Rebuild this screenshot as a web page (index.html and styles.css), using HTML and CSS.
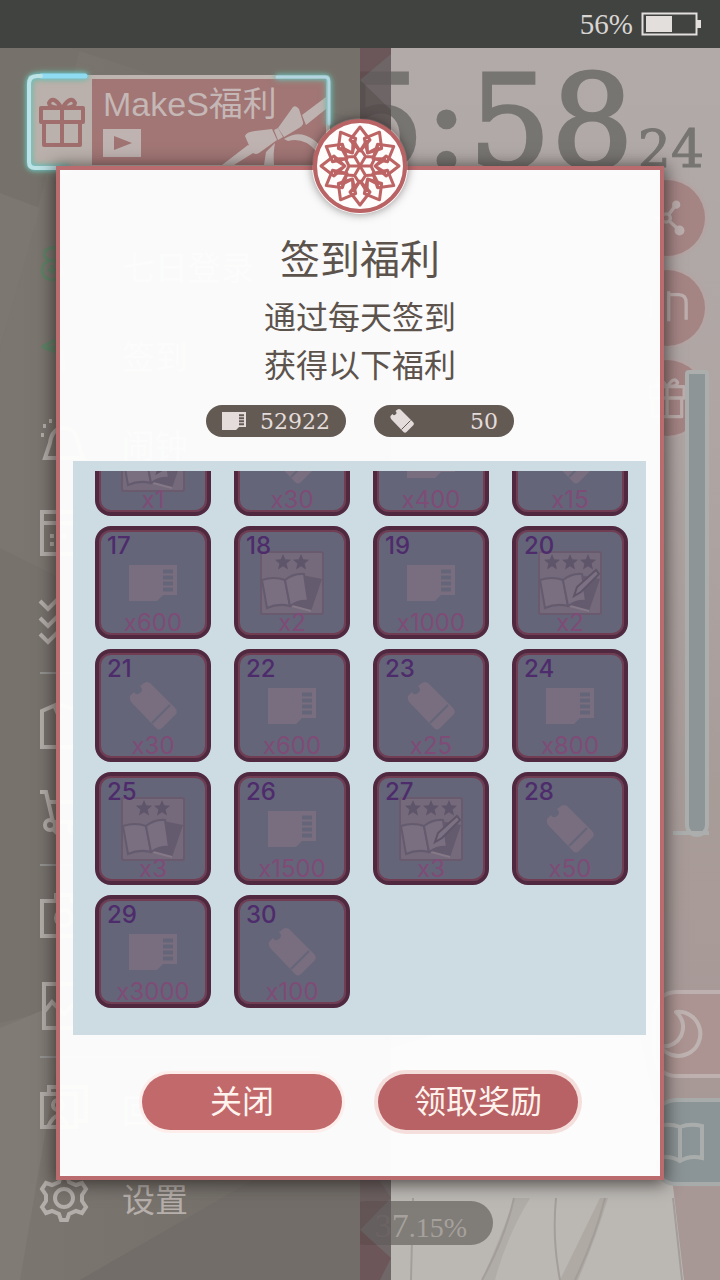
FILE: index.html
```
<!DOCTYPE html>
<html lang="zh-CN">
<head>
<meta charset="UTF-8">
<meta name="viewport" content="width=device-width, initial-scale=1.0">
<title>签到福利</title>
<link rel="stylesheet" href="styles.css">
</head>
<body>

<svg class="sprites" aria-hidden="true">
  <symbol id="i-card" viewBox="0 0 48 48">
    <path d="M0 6H48V36H34L28 42H0Z" fill="currentColor"/>
    <path d="M34 12.500h10M34 18.500h10M34 24.500h10M34 30.500h10" stroke="var(--cut)" stroke-width="4"/>
  </symbol>
  <symbol id="i-ticket" viewBox="0 0 48 48">
    <path d="M1 14Q0 18 3 21L27 46Q30 49 33 46L47 32Q49 29 46 26L21 1Q18 -1 15 1L11 4Q15 8 11 11Q7 14 5 10Z" fill="currentColor"/>
    <path d="M23 41L41 23" stroke="var(--cut)" stroke-width="2"/>
  </symbol>
  <symbol id="i-star" viewBox="0 0 16 16">
    <path d="M8 0L10.200 5.300L16 5.800L11.600 9.600L13 15.500L8 12.300L3 15.500L4.400 9.600L0 5.800L5.800 5.300Z"/>
  </symbol>
  <symbol id="i-book" viewBox="0 0 64 64">
    <rect x="1" y="1" width="62" height="62" rx="2" fill="#746a7b" stroke="#6a5a6e" stroke-width="2"/>
    <path d="M42 24L62 28L51 60L30 55Z" fill="#655b6f"/>
    <path d="M32 55L51 60" stroke="#857987" stroke-width="2"/>
    <path d="M2 29Q14 25 25 29L30 55Q18 52 7 57Z" fill="#7a6f80" stroke="#655b6f" stroke-width="2"/>
    <path d="M25 29Q34 22 44 23L48 50Q39 49 30 55Z" fill="#7a6f80" stroke="#655b6f" stroke-width="2"/>
  </symbol>
  <symbol id="i-pen" viewBox="0 0 64 64">
    <path d="M36 45L39 36L58 19L61 23L43 41Z" fill="#7c7182" stroke="#5f5569" stroke-width="2"/>
  </symbol>
  <symbol id="i-gift" viewBox="0 0 48 54">
    <g fill="none" stroke="currentColor" stroke-width="4" stroke-linejoin="round">
      <path d="M3 13H45V27H3ZM6 27V50H42V27M24 13V50M23 12Q12 14 11 8Q15 0 23 12ZM25 12Q36 14 37 8Q33 0 25 12Z"/>
    </g>
  </symbol>
</svg>

<header class="status">
  <span>56%</span>
  <svg class="battery" viewBox="0 0 60 24">
    <rect x="1.500" y="1.500" width="54" height="21" fill="none" stroke="#e3dfdd" stroke-width="2"/>
    <rect x="5" y="4" width="26" height="16" fill="#e3dfdd"/>
    <rect x="56" y="8" width="4" height="8" fill="#e3dfdd"/>
  </svg>
</header>

<main class="stage">

  <section class="home">
    <svg class="scene" viewBox="0 0 720 1232" preserveAspectRatio="xMaxYMax slice" aria-hidden="true">
      <path d="M360 1010L440 985L640 990L672 1130L684 1232H360Z" fill="#bbb8b4"/>
      <path d="M515 1150Q500 1190 482 1232H495Q506 1190 530 1150Z" fill="#b0aca7"/>
      <path d="M600 1150L560 1232H578Q596 1190 608 1150Z" fill="#afaaa4"/>
      <path d="M514 1150Q505 1190 482 1232M556 1150Q552 1190 560 1232M605 1150Q595 1190 575 1232M413 1150L411 1232M673 1150L682 1232" fill="none" stroke="#a39e99" stroke-width="2"/>
    </svg>
    <div class="clock"><span>5:58</span><small>24</small></div>
    <div class="tools">
      <button class="tool" aria-label="分享">
        <svg viewBox="0 0 48 48" fill="none" stroke="currentColor" stroke-width="4">
          <circle cx="23" cy="24" r="5"/><path d="M26 20L34 9M27 28L38 38M18 24H8"/>
          <circle cx="35" cy="8" r="3" fill="currentColor"/><circle cx="39" cy="39" r="4" fill="currentColor"/>
        </svg>
      </button>
      <button class="tool" aria-label="床">
        <svg viewBox="0 0 48 48" fill="none" stroke="currentColor" stroke-width="4">
          <path d="M5 8V36M26 4V40M26 8H38Q47 8 47 18V38"/>
        </svg>
      </button>
      <button class="tool" aria-label="礼物"><svg viewBox="0 0 48 54"><use href="#i-gift"/></svg></button>
    </div>
    <div class="gauge"></div>
    <div class="tabs">
      <button class="tab" aria-label="夜间">
        <svg viewBox="0 0 48 48" fill="none" stroke="currentColor" stroke-width="4" stroke-linejoin="round">
          <path d="M20 2A22 22 0 1 1 4 36Q18 38 25 26Q31 12 20 2Z"/>
        </svg>
      </button>
      <button class="tab blue" aria-label="书">
        <svg viewBox="0 0 48 48" fill="none" stroke="currentColor" stroke-width="4">
          <path d="M2 8Q14 5 24 9Q34 5 46 8V40Q34 37 24 43Q14 37 2 40ZM24 9V43"/>
        </svg>
      </button>
    </div>
    <div class="progress"><b>37</b>.15%</div>
  </section>

  <svg class="strip" viewBox="0 0 31 1232" preserveAspectRatio="none" aria-hidden="true">
    <path d="M0 0H31V6L0 32Z" fill="#5f484c"/>
    <path d="M0 32L31 62V110H0Z" fill="#544a4b"/>
    <path d="M0 1130H18L31 1150L0 1182Z" fill="#5e4f51"/>
    <path d="M0 1182L31 1210L20 1232H0Z" fill="#5f464a"/>
  </svg>

  <nav class="drawer">
    <svg class="scene" viewBox="0 0 360 1232" preserveAspectRatio="none" aria-hidden="true">
      <path d="M0 0H80L70 40L0 300Z" fill="#76716b"/>
      <path d="M70 0H360V70L210 45Z" fill="#76706a"/>
      <path d="M0 145L40 160L0 300Z" fill="#7d7771"/>
      <path d="M0 500L60 530V960L0 975Z" fill="#77726c"/>
      <path d="M0 980L60 955V1000L20 1232H0Z" fill="#807b75"/>
      <path d="M80 1232L360 1070V1232Z" fill="#726d68"/>
    </svg>
    <a class="banner" href="#">
      <span class="banner-icon"><svg viewBox="0 0 48 54"><use href="#i-gift"/></svg></span>
      <span class="banner-body">
        <span class="banner-title">MakeS福利</span>
        <svg class="play" viewBox="0 0 38 28"><path d="M0 0H38V28H0Z" fill="#bfb3b1"/><path d="M11 7L29 14L11 21Z" fill="#9f7473"/></svg>
        <svg class="ribbon" viewBox="0 0 104 74" fill="#bfb3b1" aria-hidden="true">
          <path d="M0 74L26 54L36 59L12 74ZM80 24L104 6V18L84 34Z"/>
          <path d="M23 45Q24 41 33 40L50 38L55 49L37 62Q32 65 29 59Z"/>
          <path d="M56 37L71 16Q74 14 77 18L81 31Q82 34 77 37L62 46Z"/>
          <path d="M52 39L56 37L61 46L56 49ZM44 61L53 52Q51 62 52 74H42ZM62 48Q84 34 104 62L94 60Q82 46 66 50Z"/>
        </svg>
      </span>
      <svg class="glow" viewBox="0 0 304 96" preserveAspectRatio="none" fill="none" stroke-linecap="round" aria-hidden="true">
        <path d="M14 2H58" stroke="#8fdcf2" stroke-width="5"/>
        <path d="M14 2H10Q2 2 2 10V88Q2 94 8 94H40" stroke="#bce3e6" stroke-width="4"/>
        <path d="M250 3H298Q302 3 302 8V50" stroke="#b4d5e0" stroke-width="3"/>
      </svg>
    </a>
    <ul class="menu">
      <li><a class="on" href="#"><svg viewBox="0 0 48 48"><path d="M10 18Q2 16 5 9Q10 4 18 7M12 18Q2 20 2 29Q3 37 12 38Q21 37 22 29Q21 20 12 18ZM7 28H16M12 23V32"/></svg>七日登录</a></li>
      <li><a class="on" href="#"><svg viewBox="0 0 48 48"><path d="M2 16L13 10Q25 14 24 42Q20 20 13 20L2 16H16"/></svg>签到</a></li>
      <li><a href="#"><svg viewBox="0 0 48 48"><path d="M5 38H43L38 23Q36 8 24 8Q12 8 10 23ZM1 15h3M3 6h3M9 1h3"/></svg>闹钟</a></li>
      <li><a href="#" aria-label="日历"><svg viewBox="0 0 48 48"><path d="M2 3H46V45H2ZM2 14H46M10 27h4M10 35h4M22 27h4"/></svg></a></li>
      <li><a href="#" aria-label="任务"><svg viewBox="0 0 48 48"><path d="M0 3L8 11L18 1M0 20L8 28L18 18M0 36L8 44L18 34"/></svg></a></li>
      <li class="line"><a href="#" aria-label="房间"><svg viewBox="0 0 48 48"><path d="M2 46V10L18 3L46 12V46ZM14 4L20 18"/></svg></a></li>
      <li><a href="#" aria-label="商店"><svg viewBox="0 0 48 48"><path d="M0 2H6L13 32M7 12H42L36 32H13"/><circle cx="10" cy="35" r="5"/><circle cx="34" cy="38" r="5"/><path d="M12 38L20 46"/></svg></a></li>
      <li class="line"><a href="#" aria-label="相机"><svg viewBox="0 0 48 48"><path d="M2 8H16V2H32V8H46V43H2Z"/><circle cx="24" cy="25" r="8"/></svg></a></li>
      <li><a href="#" aria-label="图片"><svg viewBox="0 0 48 48"><path d="M4 2H44V46H4ZM4 30L12 20L24 32L32 24L44 34"/></svg></a></li>
      <li class="line"><a href="#"><svg viewBox="0 0 48 48"><path d="M2 9H36V42H2ZM9 9V2H46V36H36"/><circle cx="18" cy="20" r="5"/><path d="M8 42Q18 20 28 42"/></svg>回忆</a></li>
      <li><a href="#"><svg viewBox="0 0 48 48"><path d="M19 8L21 2H27L29 8L36 11L42 9L46 15L42 21V27L46 33L42 39L36 37L29 40L27 46H21L19 40L12 37L6 39L2 33L6 27V21L2 15L6 9L12 11Z"/><circle cx="24" cy="24" r="9"/></svg>设置</a></li>
    </ul>
  </nav>

  <section class="modal" role="dialog" aria-labelledby="modal-title">
    <svg class="emblem" viewBox="-48 -48 96 96" aria-hidden="true">
      <circle r="45" fill="#fffdfc" stroke="#b96365" stroke-width="4"/>
      <g id="petals" fill="none" stroke="#bd6465" stroke-width="3" stroke-linejoin="round"></g>
    </svg>
    <h1 id="modal-title">签到福利</h1>
    <p>通过每天签到<br>获得以下福利</p>
    <div class="wallet">
      <span class="coin"><svg viewBox="0 0 48 48"><use href="#i-card"/></svg>52922</span>
      <span class="coin"><svg viewBox="0 0 48 48"><use href="#i-ticket"/></svg>50</span>
    </div>
    <div class="panel">
      <ol class="rewards" id="rewards"></ol>
    </div>
    <div class="actions">
      <button class="btn">关闭</button>
      <button class="btn strong">领取奖励</button>
    </div>
  </section>

</main>

<script>
  // [day, icon, amount, stars]
  const rewards = [
    [13, 'book', 1, 3], [14, 'ticket', 30], [15, 'card', 400], [16, 'ticket', 15],
    [17, 'card', 600], [18, 'book', 2, 2], [19, 'card', 1000], [20, 'book', 2, 3],
    [21, 'ticket', 30], [22, 'card', 600], [23, 'ticket', 25], [24, 'card', 800],
    [25, 'book', 3, 2], [26, 'card', 1500], [27, 'book', 3, 3], [28, 'ticket', 50],
    [29, 'card', 3000], [30, 'ticket', 100]
  ];

  function icon(type, stars) {
    if (type !== 'book') {
      return `<svg class="item" viewBox="0 0 48 48"><use href="#i-${type}"/></svg>`;
    }
    let out = '<use href="#i-book"/>';
    if (stars === 3) out += '<use href="#i-pen"/>';
    const start = 32 - stars * 9;
    for (let i = 0; i < stars; i++) {
      out += `<use href="#i-star" x="${start + i * 18 + 1}" y="3" width="16" height="16" fill="#5f556a"/>`;
    }
    return `<svg class="item book" viewBox="0 0 64 64">${out}</svg>`;
  }

  const list = document.getElementById('rewards');
  list.innerHTML = rewards.map(([day, type, amount, stars]) =>
    `<li class="reward"><span class="day">${day}</span>${icon(type, stars)}<span class="amount">x${amount}</span></li>`
  ).join('');
  list.scrollTop = list.scrollHeight;

  // outer ring of twelve petals, six spokes that fork in the middle
  let petals = '';
  for (let i = 0; i < 12; i++) {
    petals += `<path transform="rotate(${i * 30 + 30})" d="M0 -39L10 -26L0 -15L-10 -26ZM0 -15L-7 -26M0 -15L7 -26"/>`;
    if (i % 2) {
      petals += `<path transform="rotate(${i * 30})" d="M0 0V-11L8 -15M0 -11L-8 -15"/>`;
    }
  }
  document.getElementById('petals').innerHTML = petals;
</script>

</body>
</html>
```
FILE: styles.css
```
* {
  box-sizing: border-box;
}
body {
  margin: 0;
  min-height: 100vh;
  display: flex;
  flex-direction: column;
  background: #aea6a3;
  font-family: "Liberation Sans", "Noto Sans CJK SC", sans-serif;
  overflow-x: hidden;
}
button {
  font: inherit;
  border: none;
  padding: 0;
}
a {
  color: inherit;
  text-decoration: none;
}
ul, ol {
  list-style: none;
  margin: 0;
  padding: 0;
}
svg {
  display: block;
  overflow: visible;
}
.sprites {
  position: absolute;
  width: 0;
  height: 0;
}

/* status bar */
.status {
  height: 48px;
  padding: 0 19px;
  display: flex;
  align-items: center;
  justify-content: flex-end;
  gap: 8px;
  background: #414341;
  color: #d8d5d3;
  font-family: "Liberation Serif", serif;
  font-size: 29px;
}
.battery {
  width: 60px;
  height: 24px;
}

.stage {
  flex: 1;
  position: relative;
  display: flex;
  flex-direction: column;
  overflow: hidden;
}
.scene {
  position: absolute;
  inset: 0;
  width: 100%;
  height: 100%;
  overflow: hidden;
}

/* home screen */
.home {
  flex: 1;
  position: relative;
  display: flex;
  flex-direction: column;
  align-items: flex-end;
  padding: 16px 0 94px;
  background: linear-gradient(#b1aaa8, #afa6a4 30%, #a89c99 60%, #a79795);
}
.clock {
  position: relative;
  display: flex;
  align-items: baseline;
  gap: 4px;
  padding-right: 16px;
  height: 116px;
  line-height: 116px;
  color: #777572;
  font-family: "DejaVu Serif", serif;
  font-size: 130px;
  -webkit-text-stroke: 3px #777572;
}
.clock small {
  font-size: 52px;
  -webkit-text-stroke: 1px #777572;
}
.tools {
  position: relative;
  display: flex;
  flex-direction: column;
  gap: 14px;
  padding-right: 15px;
}
.tool {
  width: 76px;
  height: 76px;
  display: flex;
  align-items: center;
  justify-content: center;
  border-radius: 50%;
  background: #a58484;
  box-shadow: 0 0 0 3px #b3a5a3;
  color: #bcaeac;
}
.tool svg {
  width: 40px;
  height: 44px;
}
.gauge {
  position: absolute;
  top: 322px;
  right: 11px;
  width: 24px;
  height: 467px;
  border: 4px solid #abaeac;
  border-radius: 4px 4px 12px 12px;
  background: #8d9597;
}
.gauge::after {
  content: "";
  position: absolute;
  right: -4px;
  bottom: -2px;
  width: 36px;
  height: 4px;
  background: #abaeac;
}
.tabs {
  position: relative;
  margin-top: auto;
  display: flex;
  flex-direction: column;
  gap: 20px;
}
.tab {
  width: 68px;
  height: 88px;
  display: flex;
  align-items: center;
  border: 4px solid #bdb0ae;
  border-right: none;
  border-radius: 24px 0 0 24px;
  background: #ac9492;
  color: #bfb3b1;
}
.tab svg {
  width: 48px;
  height: 48px;
}
.tab.blue {
  border-color: #a7abaa;
  background: #8b9496;
  color: #a9adac;
}
.progress {
  position: absolute;
  right: 227px;
  bottom: 35px;
  width: 150px;
  height: 44px;
  padding-right: 26px;
  border-radius: 22px;
  background: #807c77;
  color: #a6a19d;
  font-family: "Liberation Serif", serif;
  font-size: 28px;
  line-height: 50px;
  text-align: right;
}
.progress b {
  font-size: 34px;
  font-weight: normal;
}

/* drawer */
.strip {
  position: absolute;
  top: 0;
  left: 50%;
  width: 31px;
  height: 100%;
  background: #625a5b;
  opacity: .85;
}
.drawer {
  position: absolute;
  top: 0;
  left: 0;
  width: 50%;
  height: 100%;
  padding-top: 27px;
  background: linear-gradient(90deg, #7b766f, #726d68);
  color: #b6afab;
}
.banner {
  position: relative;
  display: flex;
  height: 94px;
  margin: 0 30px 0 28px;
  border: 4px solid #bfb5b0;
  border-radius: 4px;
  background: #bbb1ac;
}
.banner-icon {
  width: 60px;
  display: flex;
  align-items: center;
  justify-content: center;
  color: #9f6e6d;
}
.banner-icon svg {
  width: 48px;
  height: 54px;
}
.banner-body {
  position: relative;
  flex: 1;
  padding-left: 11px;
  background: #a17675;
  overflow: hidden;
}
.banner-title {
  display: block;
  color: #c4b7b5;
  font-size: 34px;
  line-height: 50px;
  white-space: nowrap;
}
.play {
  width: 38px;
  height: 28px;
}
.ribbon {
  position: absolute;
  right: 0;
  bottom: 0;
  width: 104px;
  height: 74px;
}
.glow {
  position: absolute;
  inset: -5px;
  width: calc(100% + 10px);
  height: calc(100% + 10px);
  filter: drop-shadow(0 0 2px #6cc5dc) drop-shadow(0 0 3px #6fb58f);
}
.menu {
  position: relative;
  margin-top: 52px;
  padding: 0 0 0 40px;
}
.menu a {
  display: flex;
  align-items: center;
  gap: 34px;
  height: 89px;
  font-size: 33px;
}
.menu svg {
  width: 48px;
  height: 48px;
  fill: none;
  stroke: #b4aeaa;
  stroke-width: 4;
}
.menu .on svg {
  stroke: #5f8267;
  stroke-width: 3;
}
.menu .line::before {
  content: "";
  display: block;
  height: 2px;
  margin: 6px 40px 6px 0;
  background: #939391;
}

/* sign-in dialog */
.modal {
  position: absolute;
  top: 118px;
  left: 56px;
  right: 56px;
  padding: 60px 0 46px;
  border: 4px solid #ba6b6e;
  background: rgba(253, 253, 253, .98);
  background-clip: padding-box;
  box-shadow: 0 2px 16px 2px rgba(35, 30, 28, .7);
  color: #5d534d;
  text-align: center;
}
.emblem {
  position: absolute;
  top: -52px;
  left: 50%;
  width: 96px;
  height: 96px;
  margin-left: -48px;
  border-radius: 50%;
  box-shadow: 0 0 10px rgba(35, 30, 28, .5);
}
.modal h1 {
  margin: 0;
  font-size: 40px;
  font-weight: normal;
  line-height: 60px;
}
.modal p {
  margin: 4px 0 0;
  font-size: 32px;
  line-height: 48px;
}
.wallet {
  display: flex;
  justify-content: center;
  gap: 28px;
  margin-top: 15px;
}
.coin {
  --cut: #645a54;
  display: flex;
  align-items: center;
  justify-content: space-between;
  width: 140px;
  height: 32px;
  padding: 0 16px;
  border-radius: 16px;
  background: #645a54;
  color: #e4dcda;
  font-family: "DejaVu Serif", serif;
  font-size: 22px;
}
.coin svg {
  width: 24px;
  height: 24px;
}
.panel {
  margin: 24px 14px 0 13px;
  padding: 10px 18px 27px 22px;
  background: #cddbe3;
}
.rewards {
  --cut: #646579;
  display: grid;
  grid-template-columns: repeat(4, 1fr);
  gap: 10px 23px;
  max-height: 537px;
  overflow-y: auto;
  scrollbar-width: none;
}
.reward {
  position: relative;
  display: flex;
  align-items: center;
  justify-content: center;
  height: 113px;
  border: 4px solid #50283f;
  border-radius: 16px;
  background: #646579;
  box-shadow: inset 0 0 0 2px #713d53;
  color: #786e7f;
}
.item {
  width: 48px;
  height: 48px;
}
.item.book {
  width: 64px;
  height: 64px;
}
.day, .amount {
  position: absolute;
  font-family: Inter, sans-serif;
  font-size: 24px;
  line-height: 24px;
}
.day {
  top: 4px;
  left: 8px;
  color: #4e2c6c;
  font-weight: 500;
}
.amount {
  left: 0;
  right: 0;
  bottom: 0;
  color: #7f4b77;
}
.actions {
  display: flex;
  justify-content: center;
  gap: 36px;
  margin-top: 39px;
}
.btn {
  width: 200px;
  height: 56px;
  border-radius: 28px;
  background: #c1696b;
  box-shadow: 0 0 0 3px #fdeeec;
  color: #fff3ee;
  font-size: 32px;
  line-height: 56px;
  cursor: pointer;
}
.btn.strong {
  background: #b96265;
  box-shadow: 0 0 0 4px #f5dfdc;
}
```
